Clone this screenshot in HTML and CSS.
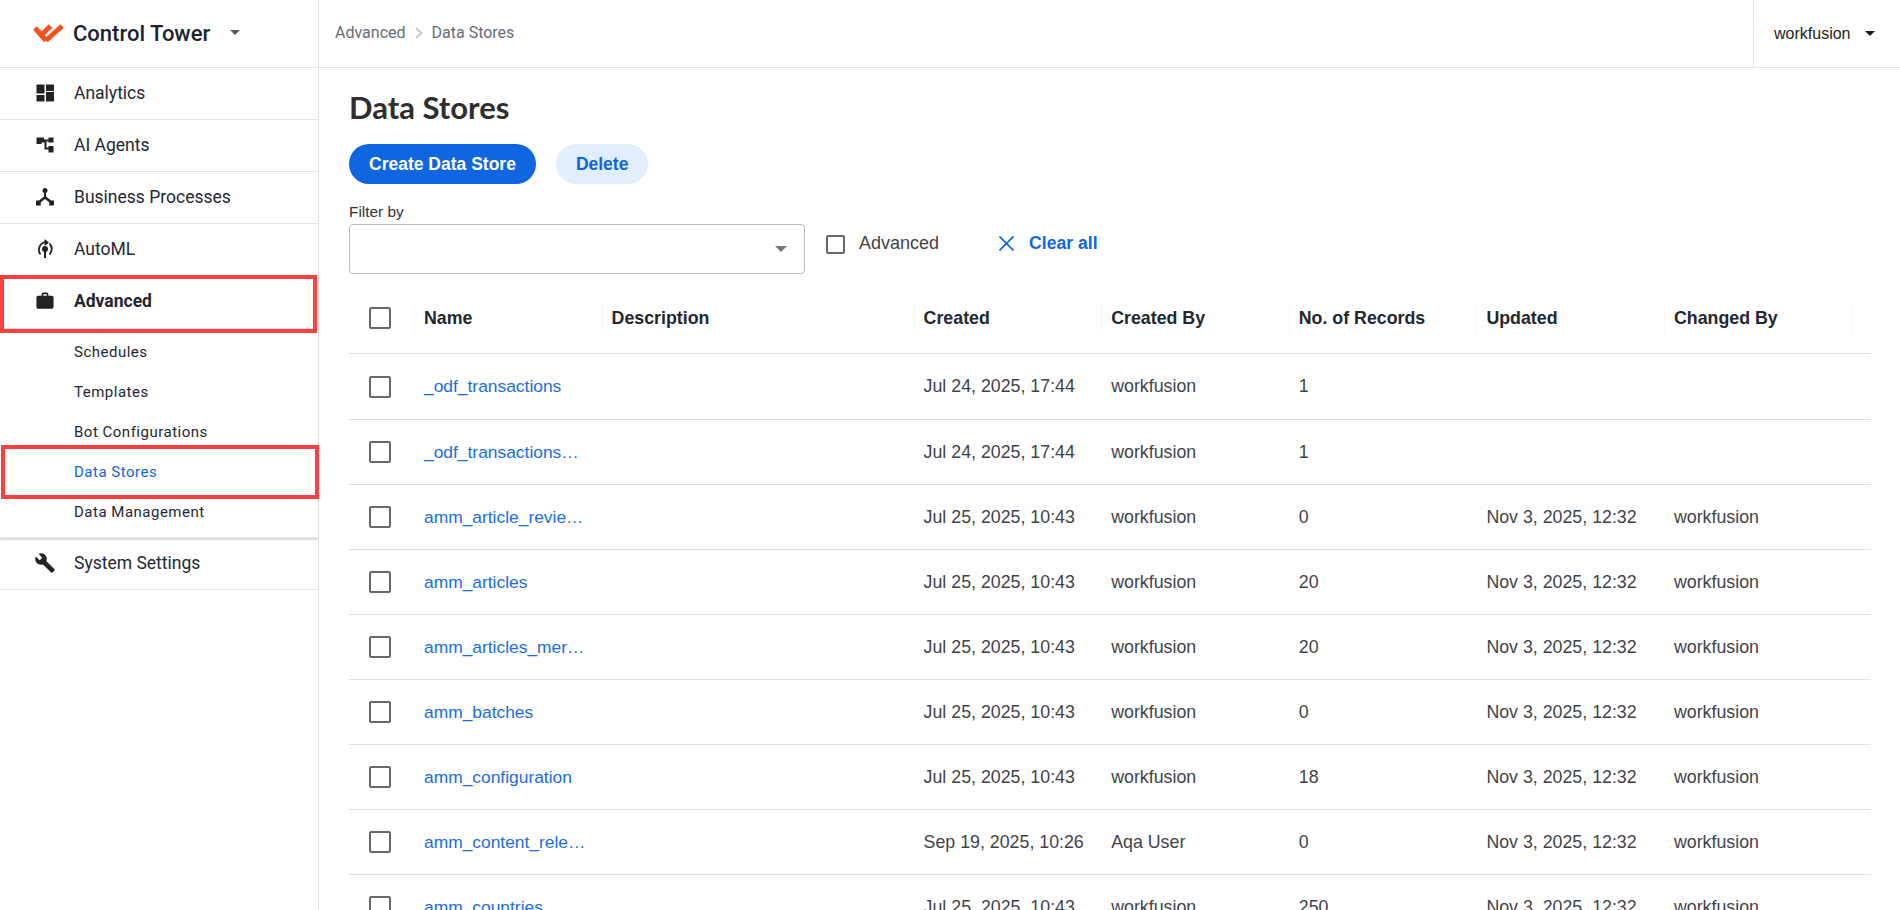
FILE: index.html
```html
<!DOCTYPE html>
<html lang="en">
<head>
  <meta charset="UTF-8" />
  <title>Data Stores</title>
  <link rel="stylesheet" href="styles.css">
</head>
<body>
  <aside class="sidebar">
    <div class="brand">
      <svg class="brand-logo" viewBox="33 24 30 20"><path d="M35 28 L46 40.500 M40 36.500 L50.500 26 M46 40.500 L62 26" fill="none" stroke="#f4511e" stroke-width="5"/></svg>
      <span class="brand-name">Control Tower</span>
      <span class="caret"></span>
    </div>
    <nav>
      <a class="nav-item">
        <svg class="nav-icon" viewBox="0 0 24 24"><path d="M3.500 12.500h8v-9h-8v9zm0 8h8v-6.500h-8v6.500zm9.500 0h8v-9.500h-8v9.500zm0-17v6.500h8V3.500h-8z"/></svg>
        Analytics
      </a>
      <a class="nav-item">
        <svg class="nav-icon" viewBox="0 0 24 24"><path d="M3.500 4.500h7.500v2h4.500v-2h5v5h-5v-1h-2v6h2v-1.500h5v6.500h-5v-3h-4V9.500h-3v1.500h-5z"/></svg>
        AI Agents
      </a>
      <a class="nav-item">
        <svg class="nav-icon" viewBox="0 0 24 24"><path d="M12 3a2.600 2.600 0 0 1 1 5v3.600l5 3.900h3v5h-4.800v-3.200l-4.200-3.300-4.200 3.300v3.200H3v-5h3l5-3.900V8a2.600 2.600 0 0 1 1-5z"/></svg>
        Business Processes
      </a>
      <a class="nav-item">
        <svg class="nav-icon" viewBox="0 0 24 24">
          <path d="M7.500 17.500A7.800 7.800 0 0 1 12 5.200M16.500 6.500a7.800 7.800 0 0 1 0 11" fill="none" stroke="#222" stroke-width="1.800"/>
          <path d="M11.500 2 L16 5.500 L11.500 9 Z"/>
          <circle cx="12" cy="12" r="3"/>
          <path d="M11 13h2v8h-2z"/>
        </svg>
        AutoML
      </a>
      <div class="nav-group">
        <a class="nav-item nav-item-open">
          <svg class="nav-icon" viewBox="-2 -2 28 28"><path d="M20 6h-4V4a2 2 0 0 0-2-2h-4a2 2 0 0 0-2 2v2H4a2 2 0 0 0-2 2v11a2 2 0 0 0 2 2h16a2 2 0 0 0 2-2V8a2 2 0 0 0-2-2zm-6 0h-4V4h4v2z"/></svg>
          Advanced
        </a>
        <a class="sub-item">Schedules</a>
        <a class="sub-item">Templates</a>
        <a class="sub-item">Bot Configurations</a>
        <a class="sub-item sub-item-active">Data Stores</a>
        <a class="sub-item">Data Management</a>
      </div>
      <a class="nav-item">
        <svg class="nav-icon" viewBox="-1.500 -1.500 27 27"><path d="M22.700 19l-9.100-9.100c.9-2.300.4-5-1.500-6.900-2-2-5-2.400-7.400-1.300L9 6 6 9 1.600 4.700C.4 7.100.9 10.100 2.900 12.100c1.900 1.900 4.600 2.400 6.900 1.500l9.100 9.100c.4.400 1 .4 1.400 0l2.300-2.300c.5-.4.500-1.100.1-1.400z"/></svg>
        System Settings
      </a>
    </nav>
  </aside>

  <div class="mark mark-advanced"></div>
  <div class="mark mark-stores"></div>

  <div class="content">
    <header class="topbar">
      <div class="crumbs">
        <span>Advanced</span>
        <svg class="crumb-sep" viewBox="0 0 8 12"><path d="M1 .800 L6.400 6 L1 11.200" fill="none" stroke="#c4c4c4" stroke-width="1.800"/></svg>
        <span>Data Stores</span>
      </div>
      <div class="user">workfusion <span class="caret caret-dark"></span></div>
    </header>

    <main class="page">
      <h1>Data Stores</h1>
      <div class="actions">
        <button class="btn btn-primary">Create Data Store</button>
        <button class="btn btn-light">Delete</button>
      </div>
      <div class="filters">
        <div class="filter-field">
          <label class="filter-label">Filter by</label>
          <div class="select"><span class="caret caret-grey"></span></div>
        </div>
        <span class="box box-small"></span>
        <span class="adv-label">Advanced</span>
        <a class="clear">
          <svg viewBox="0 0 16 16"><path d="M.500 .500 L15.500 15.500 M15.500 .500 L.500 15.500" stroke="#0f66e0" stroke-width="1.800" fill="none"/></svg>
          Clear all
        </a>
      </div>

      <table class="grid">
        <colgroup>
          <col class="col-check">
          <col class="col-data"><col class="col-desc"><col class="col-data"><col class="col-data">
          <col class="col-data"><col class="col-data"><col class="col-data">
          <col>
        </colgroup>
        <thead>
          <tr>
            <th><span class="box"></span></th>
            <th><div class="th-in">Name</div></th>
            <th><div class="th-in">Description</div></th>
            <th><div class="th-in">Created</div></th>
            <th><div class="th-in">Created By</div></th>
            <th><div class="th-in">No. of Records</div></th>
            <th><div class="th-in">Updated</div></th>
            <th><div class="th-in">Changed By</div></th>
            <th><div class="th-in"></div></th>
          </tr>
        </thead>
        <tbody>
          <tr><td><span class="box"></span></td><td><a class="name">_odf_transactions</a></td><td></td><td>Jul 24, 2025, 17:44</td><td>workfusion</td><td>1</td><td></td><td></td><td></td></tr>
          <tr><td><span class="box"></span></td><td><a class="name">_odf_transactions…</a></td><td></td><td>Jul 24, 2025, 17:44</td><td>workfusion</td><td>1</td><td></td><td></td><td></td></tr>
          <tr><td><span class="box"></span></td><td><a class="name">amm_article_revie…</a></td><td></td><td>Jul 25, 2025, 10:43</td><td>workfusion</td><td>0</td><td>Nov 3, 2025, 12:32</td><td>workfusion</td><td></td></tr>
          <tr><td><span class="box"></span></td><td><a class="name">amm_articles</a></td><td></td><td>Jul 25, 2025, 10:43</td><td>workfusion</td><td>20</td><td>Nov 3, 2025, 12:32</td><td>workfusion</td><td></td></tr>
          <tr><td><span class="box"></span></td><td><a class="name">amm_articles_mer…</a></td><td></td><td>Jul 25, 2025, 10:43</td><td>workfusion</td><td>20</td><td>Nov 3, 2025, 12:32</td><td>workfusion</td><td></td></tr>
          <tr><td><span class="box"></span></td><td><a class="name">amm_batches</a></td><td></td><td>Jul 25, 2025, 10:43</td><td>workfusion</td><td>0</td><td>Nov 3, 2025, 12:32</td><td>workfusion</td><td></td></tr>
          <tr><td><span class="box"></span></td><td><a class="name">amm_configuration</a></td><td></td><td>Jul 25, 2025, 10:43</td><td>workfusion</td><td>18</td><td>Nov 3, 2025, 12:32</td><td>workfusion</td><td></td></tr>
          <tr><td><span class="box"></span></td><td><a class="name">amm_content_rele…</a></td><td></td><td>Sep 19, 2025, 10:26</td><td>Aqa User</td><td>0</td><td>Nov 3, 2025, 12:32</td><td>workfusion</td><td></td></tr>
          <tr><td><span class="box"></span></td><td><a class="name">amm_countries</a></td><td></td><td>Jul 25, 2025, 10:43</td><td>workfusion</td><td>250</td><td>Nov 3, 2025, 12:32</td><td>workfusion</td><td></td></tr>
        </tbody>
      </table>
    </main>
  </div>
</body>
</html>
```

FILE: styles.css
```css
html, body {
  height: 100%;
}

body {
  margin: 0;
  display: flex;
  height: 910px;
  overflow: hidden;
  background: #fff;
  color: #2b2f36;
  font-family: "Liberation Sans", Arial, sans-serif;
  font-size: 16px;
}

.sidebar {
  width: 318px;
  flex: none;
  border-right: 1px solid #e4e4e4;
  font-family: Roboto, sans-serif;
  color: #1f2733;
}

.brand {
  height: 67px;
  border-bottom: 1px solid #e4e4e4;
  display: flex;
  align-items: center;
  padding-left: 33px;
}

.brand-logo {
  width: 30px;
  height: 20px;
  margin-right: 10px;
}

.brand-name {
  font-size: 22px;
  font-weight: 500;
  color: #1b2430;
}

.caret {
  width: 0;
  height: 0;
  border-left: 5.5px solid transparent;
  border-right: 5.5px solid transparent;
  border-top: 5.5px solid #55585c;
  margin-left: 20px;
  margin-top: -2px;
}

.caret-dark {
  display: inline-block;
  border-top-color: #1c1c1c;
  margin: 0 0 0 15px;
}

.caret-grey {
  border-left-width: 6.5px;
  border-right-width: 6.5px;
  border-top: 6.5px solid #77797c;
  margin: 0;
}

.nav-item {
  display: flex;
  align-items: center;
  box-sizing: border-box;
  height: 52px;
  padding-bottom: 2px;
  border-bottom: 1px solid #e4e4e4;
  font-size: 17.500px;
}

.nav-icon {
  width: 24px;
  height: 24px;
  margin: 0 17.500px 0 32.500px;
  fill: #222;
  flex: none;
}

.nav-group {
  border-bottom: 1px solid #e4e4e4;
  box-shadow: 0 2px 2px #d8d8d8;
}

.nav-item-open {
  font-weight: 700;
  box-shadow: 0 1px 2px #c8c8c8;
  border-bottom: 1px solid transparent;
}

.sub-item {
  display: flex;
  align-items: center;
  height: 40px;
  padding-left: 74px;
  font-size: 15px;
  letter-spacing: 0.500px;
}

.nav-group .nav-item-open + .sub-item {
  margin-top: 4px;
}

.sub-item:last-child {
  margin-bottom: 5px;
}

.sub-item-active {
  color: #0f66e0;
}

/* red marks drawn over the screenshot, not part of the app */
.mark {
  position: absolute;
  box-sizing: border-box;
  border: 4px solid #ff4040;
  pointer-events: none;
}

.mark-advanced {
  left: 0;
  top: 275px;
  width: 317px;
  height: 58px;
}

.mark-stores {
  left: 1px;
  top: 445px;
  width: 318px;
  height: 54px;
}

.content {
  flex: 1;
  min-width: 0;
}

.topbar {
  height: 67px;
  border-bottom: 1px solid #e4e4e4;
  display: flex;
  align-items: center;
  justify-content: space-between;
}

.crumbs {
  padding: 0 0 2px 16px;
  display: flex;
  align-items: center;
  gap: 9px;
  font-family: Roboto, sans-serif;
  font-size: 16px;
  color: #666d75;
}

.crumb-sep {
  width: 8px;
  height: 12px;
}

.user {
  align-self: stretch;
  width: 147px;
  border-left: 1px solid #e4e4e4;
  display: flex;
  align-items: center;
  padding-left: 20px;
  box-sizing: border-box;
  font-size: 16px;
  color: #1c1c1c;
}

.page {
  padding: 0 29px 0 30px;
}

h1 {
  margin: 19px 0 0;
  height: 40px;
  line-height: 40px;
  font-family: Lato, sans-serif;
  font-size: 31px;
  font-weight: 700;
  color: #2e2e2e;
}

.actions {
  display: flex;
  gap: 20px;
  margin-top: 17px;
}

.btn {
  height: 40px;
  border: none;
  border-radius: 20px;
  font: 700 17.500px "Liberation Sans", Arial, sans-serif;
  padding: 0 20px;
}

.btn-primary {
  background: #0f66e0;
  color: #fff;
}

.btn-light {
  background: #e2edfd;
  color: #0f66e0;
}

.filters {
  display: flex;
  align-items: center;
  margin-top: 19px;
}

.filter-label {
  display: block;
  font-size: 15.400px;
  line-height: 17px;
  margin-bottom: 4px;
  color: #333;
}

.select {
  width: 456px;
  height: 50px;
  box-sizing: border-box;
  border: 1px solid #bdbdbd;
  border-radius: 4px;
  display: flex;
  align-items: center;
  justify-content: flex-end;
  padding-right: 17px;
}

.box {
  display: block;
  width: 22px;
  height: 22px;
  box-sizing: border-box;
  border: 2px solid #66686c;
  border-radius: 2px;
  margin-left: 20px;
}

.box-small {
  width: 19px;
  height: 19px;
  margin: 11px 0 0 21px;
}

.adv-label {
  margin: 9px 0 0 14px;
  font-size: 18px;
  color: #444;
}

.clear {
  display: flex;
  align-items: center;
  margin: 10px 0 0 60px;
  font-size: 17.600px;
  font-weight: 700;
  color: #0f66e0;
}

.clear svg {
  width: 15px;
  height: 15px;
  margin-right: 15px;
}

.grid {
  width: 1522px;
  table-layout: fixed;
  border-collapse: collapse;
  margin-top: 10px;
  font-size: 17.800px;
}

.col-check {
  width: 65px;
}

.col-data {
  width: 187.600px;
}

.col-desc {
  width: 312px;
}

.grid th {
  height: 67px;
  padding: 0 0 2px;
  text-align: left;
  font-weight: 700;
  color: #24272e;
  border-bottom: 1px solid #e0e0e0;
}

.th-in {
  height: 30px;
  line-height: 30px;
  padding-left: 9px;
  border-left: 1px solid #f6f6f6;
  box-sizing: border-box;
}

.grid td {
  height: 64px;
  padding: 0 10px;
  border-bottom: 1px solid #e0e0e0;
  color: #3f4349;
  white-space: nowrap;
}

.grid tbody tr:first-child td {
  height: 65px;
}

.grid td:first-child {
  padding: 0;
}

.name {
  font-size: 17.400px;
  color: #1a6de0;
}
```
